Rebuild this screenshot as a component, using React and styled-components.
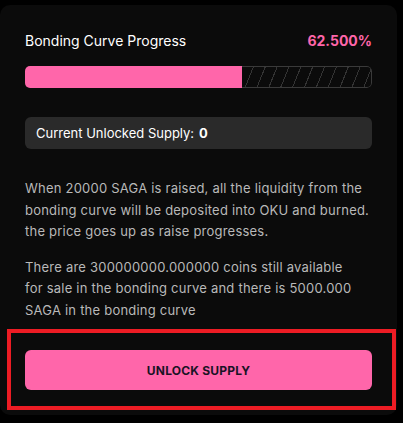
import React from "react";
import styled, { createGlobalStyle } from "styled-components";

const Global = createGlobalStyle`
  html, body { margin: 0; padding: 0; background: #000; }
  body { font-family: Inter, "Noto Sans", sans-serif; }
`;

const Card = styled.div`
  margin-top: 5px;
  width: 397px;
  box-sizing: border-box;
  background: #0b0b0b;
  border-radius: 10px;
  padding: 25px 25px 5px;
  display: flex;
  flex-direction: column;
`;

const Header = styled.div`
  display: flex;
  justify-content: space-between;
  align-items: center;
  height: 20px;
`;

const Title = styled.span`
  color: #fff;
  font-size: 14px;
`;

const Percent = styled.span`
  color: #ff66aa;
  font-size: 14px;
  font-weight: 700;
`;

const Track = styled.div`
  margin-top: 16px;
  height: 22px;
  display: flex;
  border-radius: 5px;
  overflow: hidden;
`;

const Fill = styled.div`
  background: #ff66aa;
`;

const Rest = styled.div`
  flex: 1;
  box-sizing: border-box;
  border: 1px solid #3a3a3a;
  border-left: none;
  border-radius: 0 5px 5px 0;
  background: repeating-linear-gradient(
    112deg,
    transparent 0px,
    transparent 10px,
    #343434 10px,
    #343434 11px
  );
`;

const SupplyBox = styled.div`
  margin-top: 29px;
  height: 32px;
  display: flex;
  align-items: center;
  padding: 0 11px;
  background: #2a2a2a;
  border-radius: 6px;
  color: #fff;
  font-size: 13px;
  b { font-weight: 700; margin-left: 5px; }
`;

const Para = styled.p`
  margin: ${(p) => p.$top}px 0 0;
  padding-right: ${(p) => p.$pr || 0}px;
  color: #b9b9b9;
  font-size: 13px;
  letter-spacing: 0.22px;
  line-height: 21.5px;
`;

const Highlight = styled.div`
  margin: 8px -24px 0 -18px;
  border: 4px solid #ed1c24;
  padding: 17px 20px 16px 14px;
`;

const Button = styled.button`
  width: 100%;
  height: 40px;
  border: none;
  border-radius: 6px;
  background: #ff66aa;
  color: #1a1325;
  font-family: inherit;
  font-size: 12px;
  font-weight: 700;
  letter-spacing: 0.2px;
  cursor: pointer;
`;

export default function App() {
  const progress = 62.5;
  return (
    <>
      <Global />
      <Card>
        <Header>
          <Title>Bonding Curve Progress</Title>
          <Percent>62.500%</Percent>
        </Header>
        <Track>
          <Fill style={{ width: `${progress}%` }} />
          <Rest />
        </Track>
        <SupplyBox>
          Current Unlocked Supply:<b>0</b>
        </SupplyBox>
        <Para $top={29}>
          When 20000 SAGA is raised, all the liquidity from the bonding curve
          will be deposited into OKU and burned. the price goes up as raise
          progresses.
        </Para>
        <Para $top={14} $pr={14}>
          There are 300000000.000000 coins still available for sale in the
          bonding curve and there is 5000.000 SAGA in the bonding curve
        </Para>
        <Highlight>
          <Button>UNLOCK SUPPLY</Button>
        </Highlight>
      </Card>
    </>
  );
}
